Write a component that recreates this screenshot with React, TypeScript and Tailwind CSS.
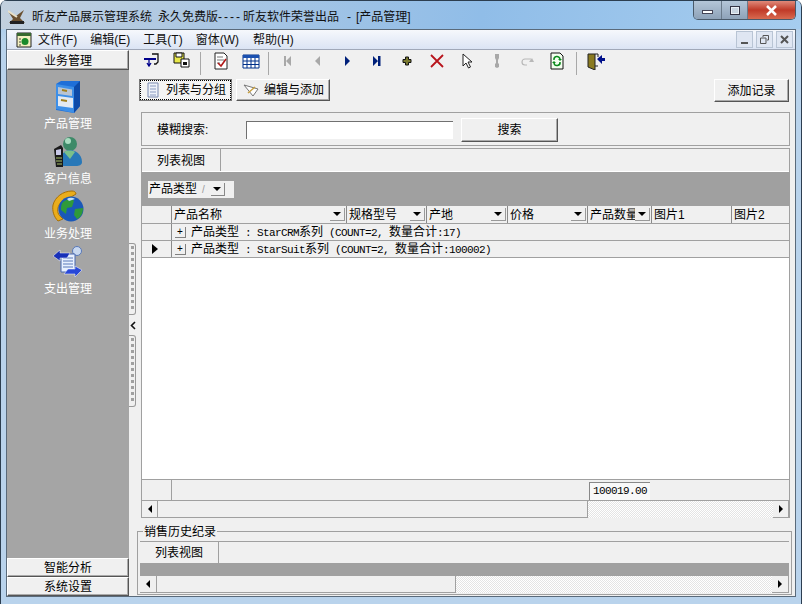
import type { ReactNode } from 'react';

const CJK = 'font-["Liberation_Sans","Noto_Sans_CJK_SC",sans-serif]';

// ---- toolbar glyphs, 16-20px drawings of the old bitmap icons ----
function Ic({ children, w = 18 }: { children: ReactNode; w?: number }) {
  return (
    <svg width={w} height={18} viewBox="0 0 18 18" className="shrink-0">
      {children}
    </svg>
  );
}

const toolIcons: ReactNode[] = [
  <Ic key="a">
    <path d="M9 2h6v8l-2 2h-2" fill="none" stroke="#111" strokeWidth="1.3" />
    <path d="M1 6h12v2H1z" fill="#00008b" />
    <path d="M6 8v6M4 11l2 3 2-3" stroke="#00008b" strokeWidth="1.3" fill="none" />
  </Ic>,
  <Ic key="b">
    <path d="M1 1h10v10H1z" fill="#e8e84a" stroke="#111" />
    <path d="M3 1h6v4H3z" fill="#fff" stroke="#111" />
    <path d="M8 7h8v8H8z" fill="#fff" stroke="#111" />
    <path d="M10 10h4v3h-4z" fill="#111" />
  </Ic>,
  <Ic key="c">
    <path d="M3 1h9l3 3v13H3z" fill="#fff" stroke="#222" />
    <path d="M5 5h6M5 8h7M5 11h3" stroke="#777" />
    <path d="M6 11l3 3 5-7" stroke="#b01818" strokeWidth="1.6" fill="none" />
  </Ic>,
  <Ic key="d">
    <path d="M1 3h16v13H1z" fill="#fff" stroke="#00308a" />
    <path d="M1 3h16v3H1z" fill="#1a50b0" />
    <path d="M1 9h16M1 12.5h16M5 6v10M9 6v10M13 6v10" stroke="#00308a" />
  </Ic>,
  <Ic key="first">
    <path d="M6 4h2v10H6zM13 4v10L8 9z" fill="#a8a8a8" />
  </Ic>,
  <Ic key="prev">
    <path d="M12 4v10L7 9z" fill="#a8a8a8" />
  </Ic>,
  <Ic key="next">
    <path d="M7 4v10l5-5z" fill="#00207a" />
  </Ic>,
  <Ic key="last">
    <path d="M5 4v10l5-5zM10 4h2.5v10H10z" fill="#00207a" />
  </Ic>,
  <Ic key="plus">
    <path d="M7.5 5h3v2.5H13v3h-2.5V13h-3v-2.5H5v-3h2.5z" fill="#7a7a30" stroke="#111" />
  </Ic>,
  <Ic key="x">
    <path d="M3 3l12 12M15 3L3 15" stroke="#b8141c" strokeWidth="1.8" />
  </Ic>,
  <Ic key="cursor">
    <path d="M5 2v12l3-3 2.5 5 2-1-2.5-5h4z" fill="#fff" stroke="#222" />
  </Ic>,
  <Ic key="ex">
    <path d="M7 2h4v4l-1 2v3l1 1v3l-2 1-2-1v-3l1-1V8L7 6z" fill="#a8a8a8" />
  </Ic>,
  <Ic key="redo">
    <path d="M13 7H7a3 3 0 0 0 0 6h2" fill="none" stroke="#b8b8b8" strokeWidth="1.2" />
    <path d="M11 10h5l-2-4z" fill="#b8b8b8" />
  </Ic>,
  <Ic key="refresh">
    <path d="M3 1h9l3 3v13H3z" fill="#f4fff0" stroke="#111" />
    <path d="M6 8a3 3 0 0 1 6-1M12 10a3 3 0 0 1-6 1" fill="none" stroke="#0a8a1c" strokeWidth="1.5" />
    <path d="M10 7h4l-2 2zM4 11h4l-2-2z" fill="#0a8a1c" />
  </Ic>,
];

function ExitIcon() {
  return (
    <svg width={20} height={18} viewBox="0 0 20 18" className="shrink-0">
      <path d="M2 2h7v16l-7-3z" fill="#8a7a20" stroke="#222" />
      <path d="M9 2h3v3M9 14h3" stroke="#222" fill="none" />
      <path d="M11 7l5-4v3h3v3h-3v3z" fill="#00108a" />
    </svg>
  );
}

function ToolSep({ w, ml }: { w: string; ml: string }) {
  return (
    <div className={`${w} h-[23px] shrink-0`}>
      <div className={`${ml} w-[2px] h-full border-l border-[#a8a8a8]`} />
    </div>
  );
}

// ---- big sidebar icons ----
function CabinetIcon() {
  return (
    <svg width={26} height={32} viewBox="0 0 26 32">
      <path d="M1 3l5-3h19v25l-6 7-18-3z" fill="#1f6fd8" />
      <path d="M19 6l6-6v25l-6 7z" fill="#0d4aa8" />
      <path d="M1 3l18 3v26L1 28z" fill="#3d8fe8" />
      <path d="M3 6l14 2.5V15L3 13z" fill="#b8c4d4" />
      <path d="M3 15l15 2v10L3 25z" fill="#e4eaf2" />
      <path d="M7 9l5 1M6 19l6 1" stroke="#a08020" strokeWidth="1.8" />
    </svg>
  );
}

function PersonPhoneIcon() {
  return (
    <svg width={30} height={32} viewBox="0 0 30 32">
      <circle cx="17" cy="8" r="7" fill="#3d8a68" />
      <circle cx="15" cy="5" r="3" fill="#a8dcc0" />
      <path d="M7 28c0-10 5-14 10-14s12 4 12 12c0 3-3 4-6 4H10z" fill="#2878b8" />
      <path d="M11 16c2-2 9-2 11 0l-5 7z" fill="#7ac08a" />
      <path d="M1 13l7-4 2 3v19H3z" fill="#1a1a1a" />
      <path d="M3 14l5-1v6H3z" fill="#c8c8e8" />
      <path d="M3 22h6M3 25h6M4 28h5" stroke="#7a8a50" strokeWidth="1.4" />
    </svg>
  );
}

function PhoneGlobeIcon() {
  return (
    <svg width={33} height={33} viewBox="0 0 33 33">
      <path d="M21 1C12 1 4 7 2 15c-1 6 1 12 5 16l5-2-2-2c-4-3-4-8-2-12 3-5 7-7 12-8l5-3c0-2-2-3-4-3z" fill="#eaad1c" stroke="#a87008" />
      <circle cx="20" cy="19" r="12.5" fill="#1a58b8" />
      <path d="M12 12c4-3 9-3 11-1l-2 6-5 1-1 6-5-4c0-3 0-6 2-8zM24 19l8-1c0 5-2 9-6 11l-3-4z" fill="#2f9a3a" />
      <path d="M16 9c3-2 6-1 8 0l-6 2z" fill="#bfe0f8" />
    </svg>
  );
}

function DocArrowsIcon() {
  return (
    <svg width={32} height={32} viewBox="0 0 32 32">
      <circle cx="25" cy="5" r="4.5" fill="#c8d8f0" stroke="#5878b8" />
      <path d="M9 8h14v18H9z" fill="#e8f0ff" stroke="#4868b0" />
      <path d="M11 12h10M11 15h10M11 18h10M11 21h10" stroke="#5878b8" />
      <path d="M1 10l7-6v3h10l-3 5H8v3z" fill="#1830b8" stroke="#fff" strokeWidth="0.5" />
      <path d="M30 24l-7 7v-3H12l4-5h7v-3z" fill="#2848d8" stroke="#fff" strokeWidth="0.5" />
    </svg>
  );
}

const sideItems: [string, ReactNode][] = [
  ['产品管理', <CabinetIcon key="c" />],
  ['客户信息', <PersonPhoneIcon key="p" />],
  ['业务处理', <PhoneGlobeIcon key="g" />],
  ['支出管理', <DocArrowsIcon key="d" />],
];

const raised =
  'border-t border-l border-t-white border-l-white border-r border-b border-r-[#555] border-b-[#555] shadow-[inset_-1px_-1px_0_#aaa]';

function SideButton({ label, h }: { label: string; h: string }) {
  return (
    <div className={`${h} ${raised} shrink-0 flex items-center justify-center pt-[1px] text-[12px] text-black bg-[#f0f0f0]`}>
      {label}
    </div>
  );
}

function Grip() {
  return (
    <div className="h-[72px] w-[7px] flex justify-center border border-l-0 border-[#999] rounded-r-[3px] py-[2px]">
      <div className="w-[3px] h-full bg-[repeating-linear-gradient(to_bottom,#a0a0a0_0_3px,transparent_3px_6px)]" />
    </div>
  );
}

function ColHead({ label, w, menu = true }: { label: string; w: string; menu?: boolean }) {
  return (
    <div className={`${w} shrink-0 h-full flex items-center border-r border-[#8a8a8a] pl-[2px] pr-[1px] overflow-hidden`}>
      <span className="flex-1 min-w-0 pt-[1px] whitespace-nowrap overflow-hidden">{label}</span>
      {menu && (
        <span className="w-[15px] h-[13px] shrink-0 flex items-center justify-center border-r border-b border-[#999]">
          <span className="border-x-[4px] border-x-transparent border-t-[4px] border-t-black" />
        </span>
      )}
    </div>
  );
}

// ascii is drawn at 6px per char like the original bitmap font
function Mixed({ text }: { text: string }) {
  const parts = text.split(/([\x20-\x7e]+)/).filter(Boolean);
  return (
    <>
      {parts.map((p, i) =>
        /[\x20-\x7e]/.test(p) ? (
          <span key={i} className='font-["Liberation_Mono"] text-[11px] tracking-[-0.6px] whitespace-pre'>
            {p}
          </span>
        ) : (
          <span key={i}>{p}</span>
        ),
      )}
    </>
  );
}

function GroupRow({ text, current }: { text: string; current?: boolean }) {
  return (
    <div className="h-[17px] shrink-0 flex items-center border-b border-[#a0a0a0] bg-[#f0f0f0]">
      <div className="w-[30px] h-full shrink-0 flex items-center justify-center border-r border-[#8a8a8a]">
        {current && <span className="ml-[-3px] border-y-[5px] border-y-transparent border-l-[6px] border-l-black" />}
      </div>
      <span className="ml-[3px] w-[11px] h-[11px] shrink-0 flex items-center justify-center border-r border-b border-[#808080] text-[10px] leading-none">
        +
      </span>
      <span className="ml-[5px] whitespace-nowrap">
        <Mixed text={text} />
      </span>
    </div>
  );
}

function Scroll({ thumb, btn }: { thumb: string; btn: string }) {
  return (
    <div className="h-[17px] shrink-0 flex items-stretch">
      <div className={`${btn} shrink-0 flex items-center justify-center border-r border-b border-[#a0a0a0]`}>
        <span className="border-y-[4px] border-y-transparent border-r-[4px] border-r-black" />
      </div>
      <div className={`${thumb} shrink-0 border-r border-b border-[#a0a0a0] bg-[#f0f0f0]`} />
      <div className="flex-1 bg-[repeating-conic-gradient(#fff_0_25%,#e4e4e4_0_50%)] bg-[length:2px_2px]" />
      <div className={`${btn} shrink-0 flex items-center justify-center border-b border-r border-[#a0a0a0] bg-[#f0f0f0]`}>
        <span className="border-y-[4px] border-y-transparent border-l-[4px] border-l-black" />
      </div>
    </div>
  );
}

function MdiBtn({ children }: { children: ReactNode }) {
  return (
    <div className="w-[17px] h-[17px] flex items-center justify-center border border-[#b8c4d4] bg-[#dfe6f2] text-[#555]">
      {children}
    </div>
  );
}

const menus: [string, string][] = [
  ['文件(F)', 'ml-[6px]'],
  ['编辑(E)', 'ml-[13px]'],
  ['工具(T)', 'ml-[13px]'],
  ['窗体(W)', 'ml-[13px]'],
  ['帮助(H)', 'ml-[14px]'],
];

export default function App() {
  return (
    <div
      className={`${CJK} w-[802px] h-[604px] overflow-hidden flex flex-col rounded-t-[7px] border-x border-[#2c3e50] bg-[linear-gradient(to_bottom,#8fa9c6_0,#a9cbe9_20px,#b9d3ec_40px,#b9d3ec_100%)] text-[12px] text-black`}
    >
      {/* title bar */}
      <div className="h-[29px] shrink-0 flex items-start bg-[linear-gradient(100deg,#c2d0de_0,#a8c6e4_30%,#90bde8_60%,#a6cdef_100%)] border-t border-[#2c3e50]">
        <svg width={18} height={18} viewBox="0 0 18 18" className="ml-[7px] mt-[6px] shrink-0">
          <path d="M0 4l8 5 8-6-4 8 5 5H1l4-4z" fill="#6a5030" />
          <path d="M0 4l9 6" stroke="#e8e0c8" strokeWidth="2" />
          <path d="M2 14h14v3H2z" fill="#222" />
        </svg>
        <span className="ml-[6px] mt-[7px] flex whitespace-pre text-[#111]">
          <span>昕友产品展示管理系统</span>
          <span className="ml-[6px]">永久免费版</span>
          <span className="tracking-[2px]">----</span>
          <span className="ml-[1px]">昕友软件荣誉出品</span>
          <span className="ml-[8px]">-</span>
          <span className="ml-[5px]">[产品管理]</span>
        </span>
        <div className="ml-auto mr-[5px] flex h-[19px] rounded-b-[5px] overflow-hidden border border-t-0 border-[#4a5a6a]">
          <div className="w-[28px] flex items-center justify-center border-r border-[#6a7a8a] bg-[linear-gradient(to_bottom,#b4c6d8,#8ea2b8)]">
            <span className="w-[11px] h-[4px] mt-[4px] bg-white border border-[#445]" />
          </div>
          <div className="w-[26px] flex items-center justify-center border-r border-[#6a7a8a] bg-[linear-gradient(to_bottom,#b4c6d8,#8ea2b8)]">
            <span className="w-[10px] h-[9px] border border-[#334] bg-[#c8d4e0] shadow-[inset_0_0_0_1px_#e8eef4]" />
          </div>
          <div className="w-[47px] flex items-center justify-center bg-[linear-gradient(to_bottom,#e08a7a,#c03a28_50%,#d86a50)]">
            <svg width={13} height={11} viewBox="0 0 13 11">
              <path d="M2 1l9 9M11 1l-9 9" stroke="#fff" strokeWidth="2.5" />
            </svg>
          </div>
        </div>
      </div>

      {/* client window */}
      <div className="flex-1 min-h-0 mx-[5px] mb-[7px] border border-[#5a6a7a] bg-[#f0f0f0] flex flex-col">
        {/* menu */}
        <div className="h-[20px] shrink-0 flex items-center bg-[linear-gradient(to_bottom,#f6f8fc,#dbe4f4)] border-b border-[#a0a8b8]">
          <svg width={16} height={16} viewBox="0 0 16 16" className="ml-[9px] shrink-0">
            <path d="M1 1h14v14H1z" fill="#f4f0c0" stroke="#222" />
            <path d="M1 1h14v3H1z" fill="#386a30" />
            <circle cx="9" cy="9.5" r="3.5" fill="#1a8a2a" />
            <path d="M3 7h2M3 10h2M3 13h2" stroke="#444" />
          </svg>
          {menus.map(([m, ml]) => (
            <span key={m} className={`whitespace-nowrap text-[#111] ${ml}`}>
              {m}
            </span>
          ))}
          <div className="ml-auto mr-[2px] flex gap-[3px]">
            <MdiBtn>
              <span className="w-[7px] h-[2px] mt-[6px] bg-[#555]" />
            </MdiBtn>
            <MdiBtn>
              <svg width={9} height={9} viewBox="0 0 9 9">
                <path d="M3 2V.5h5.5V5H7M.5 3h5.5v5.5H.5z" fill="none" stroke="#555" />
              </svg>
            </MdiBtn>
            <MdiBtn>
              <svg width={9} height={9} viewBox="0 0 9 9">
                <path d="M1 1l7 7M8 1L1 8" stroke="#555" strokeWidth="2" />
              </svg>
            </MdiBtn>
          </div>
        </div>

        <div className="flex-1 min-h-0 flex">
          {/* sidebar */}
          <div className="w-[122px] shrink-0 flex flex-col bg-[#a5a5a5]">
            <SideButton label="业务管理" h="h-[20px]" />
            <div className="flex-1 flex flex-col items-center pt-[6px]">
              {sideItems.map(([label, icon]) => (
                <div key={label} className="h-[55px] flex flex-col items-center justify-end text-white">
                  {icon}
                  <span className="mt-[4px] leading-[14px]">{label}</span>
                </div>
              ))}
            </div>
            <SideButton label="智能分析" h="h-[19px]" />
            <SideButton label="系统设置" h="h-[19px]" />
          </div>

          {/* splitter */}
          <div className="w-[8px] shrink-0 flex flex-col pt-[193px]">
            <Grip />
            <div className="h-[20px] flex items-center pl-[1px]">
              <svg width={6} height={9} viewBox="0 0 6 9">
                <path d="M5 1L1.5 4.5 5 8" fill="none" stroke="#111" strokeWidth="1.6" />
              </svg>
            </div>
            <Grip />
          </div>

          {/* right pane */}
          <div className="flex-1 min-w-0 flex flex-col">
            <div className="h-[28px] shrink-0 flex items-start pt-[2px]">
              {toolIcons.slice(0, 2).map((ic, i) => (
                <div key={i} className="w-[30px] flex justify-center">
                  {ic}
                </div>
              ))}
              <ToolSep w="w-[9px]" ml="ml-[3px]" />
              {toolIcons.slice(2, 4).map((ic, i) => (
                <div key={i} className="w-[30px] flex justify-center">
                  {ic}
                </div>
              ))}
              <ToolSep w="w-[6px]" ml="ml-[2px]" />
              {toolIcons.slice(4).map((ic, i) => (
                <div key={i} className="w-[30px] flex justify-center">
                  {ic}
                </div>
              ))}
              <ToolSep w="w-[9px]" ml="ml-[4px]" />
              <div className="w-[30px] flex justify-center">
                <ExitIcon />
              </div>
            </div>

            <div className="h-[24px] shrink-0 flex items-start pl-[2px] pr-[6px] pt-[1px]">
              <div className="w-[93px] h-[22px] flex items-center gap-[6px] pl-[6px] border border-[#777] outline-1 outline-dotted -outline-offset-2 outline-black bg-[#f4f4f4]">
                <svg width={14} height={16} viewBox="0 0 14 16">
                  <path d="M2 1h10v14H2z" fill="#eef2fa" stroke="#7a8ab0" />
                  <path d="M4 4h6M4 7h6M4 10h6M4 13h6" stroke="#8a9ac0" />
                </svg>
                列表与分组
              </div>
              <div className={`ml-[4px] w-[94px] h-[22px] flex items-center gap-[5px] pl-[6px] ${raised}`}>
                <svg width={16} height={14} viewBox="0 0 16 14">
                  <path d="M1 2l14 4-5 7z" fill="#fff" stroke="#777" />
                  <path d="M5 10l7-6" stroke="#c8a040" strokeWidth="1.5" />
                </svg>
                编辑与添加
              </div>
              <div className={`ml-auto w-[75px] h-[23px] flex items-center justify-center ${raised}`}>添加记录</div>
            </div>

            {/* search + grid */}
            <div className="mt-[10px] ml-[4px] mr-[5px] flex flex-col flex-1 min-h-0">
              <div className="h-[34px] shrink-0 flex items-center border border-[#a0a0a0] pl-[15px] pt-[2px]">
                <span className="w-[89px] shrink-0">模糊搜索:</span>
                <div className="w-[207px] h-[18px] shrink-0 bg-white border-t border-l border-[#707070]" />
                <div className={`ml-[8px] w-[97px] h-[24px] shrink-0 flex items-center justify-center ${raised}`}>搜索</div>
              </div>

              <div className="mt-[2px] h-[370px] shrink-0 flex flex-col border border-b-0 border-[#a0a0a0]">
                <div className="h-[23px] shrink-0 flex border-b border-white">
                  <div className="w-[79px] flex items-center justify-center pt-[2px] border-r border-[#a0a0a0]">列表视图</div>
                </div>
                <div className="h-[34px] shrink-0 bg-[#a0a0a0] flex items-center pl-[6px]">
                  <div className="w-[86px] h-[17px] flex items-center pl-[1px] bg-[#f0f0f0] text-[12px]">
                    产品类型
                    <span className="ml-[5px] text-[#999] text-[10px]">/</span>
                    <span className="ml-[6px] w-[14px] h-[13px] flex items-center justify-center border-r border-b border-[#888]">
                      <span className="border-x-[4px] border-x-transparent border-t-[4px] border-t-black" />
                    </span>
                  </div>
                </div>
                <div className="h-[18px] shrink-0 flex items-center border-b border-[#a0a0a0] overflow-hidden">
                  <div className="w-[30px] h-full shrink-0 border-r border-[#8a8a8a]" />
                  <ColHead label="产品名称" w="w-[175px]" />
                  <ColHead label="规格型号" w="w-[80px]" />
                  <ColHead label="产地" w="w-[81px]" />
                  <ColHead label="价格" w="w-[80px]" />
                  <ColHead label="产品数量" w="w-[64px]" />
                  <ColHead label="图片1" w="w-[80px]" menu={false} />
                  <ColHead label="图片2" w="w-[58px]" menu={false} />
                </div>
                <GroupRow text="产品类型 : StarCRM系列 (COUNT=2, 数量合计:17)" />
                <GroupRow text="产品类型 : StarSuit系列 (COUNT=2, 数量合计:100002)" current />
                <div className="flex-1 bg-white" />
                <div className="h-[22px] shrink-0 flex border-y border-[#a0a0a0]">
                  <div className="w-[30px] border-r border-[#a0a0a0]" />
                  <div className="ml-[417px] mt-[2px] w-[61px] h-[18px] flex items-center pl-[3px] border-t border-l border-[#888] font-['Liberation_Mono'] text-[11px] tracking-[-0.6px] bg-[#f8f8f8]">
                    100019.00
                  </div>
                </div>
                <Scroll btn="w-[16px]" thumb="w-[430px]" />
              </div>
            </div>

            {/* history group */}
            <div className="relative mb-[1px] mr-[3px] h-[64px] shrink-0 border border-[#a0a0a0] flex flex-col pt-[9px] px-[2px] pb-[1px]">
              <span className="absolute left-[5px] top-[-7px] bg-[#f0f0f0] px-[1px] leading-[14px]">销售历史纪录</span>
              <div className="h-[22px] shrink-0 flex border-t border-[#a0a0a0]">
                <div className="w-[79px] flex items-center justify-center border-r border-[#a0a0a0]">列表视图</div>
              </div>
              <div className="h-[13px] shrink-0 bg-[#a0a0a0]" />
              <Scroll btn="w-[17px]" thumb="w-[299px]" />
            </div>
          </div>
        </div>
      </div>
    </div>
  );
}
